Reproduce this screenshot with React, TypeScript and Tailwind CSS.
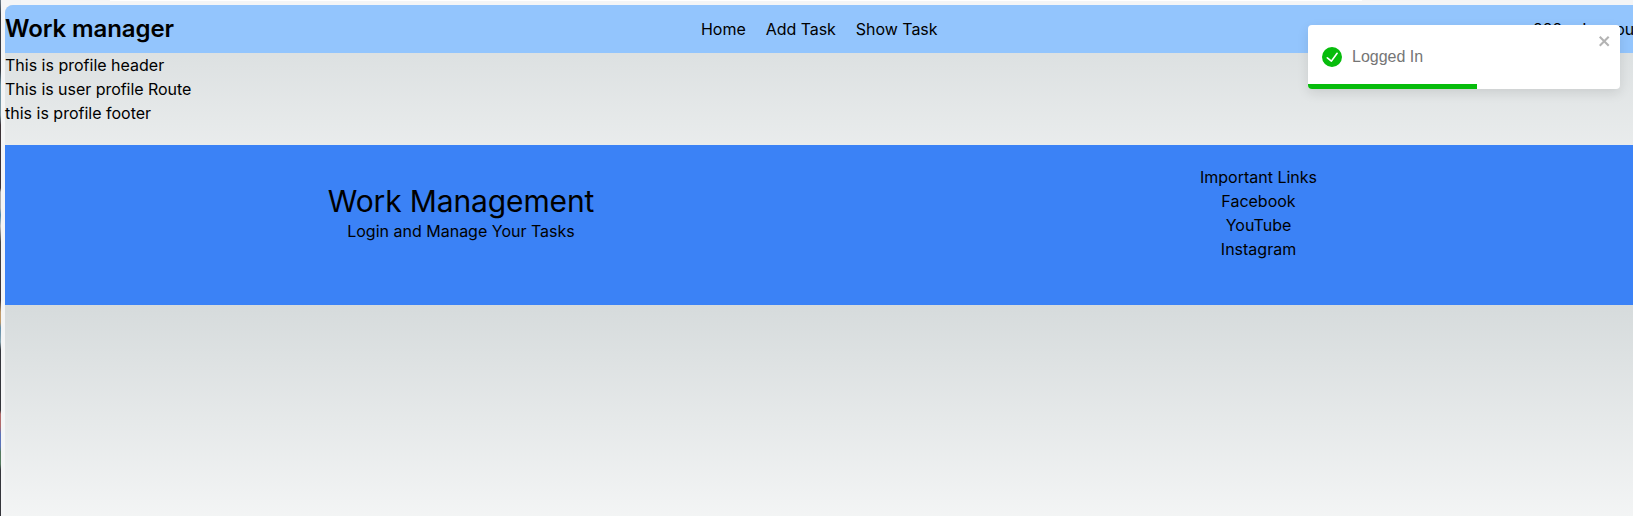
const edge =
  "bg-[linear-gradient(#6b7a86_0px,#3a4048_14px,#35363c_70px,#6d94a6_85px,#7a93a0_115px,#3b3236_125px,#3b3236_188px,#aaaaaa_192px,#aaaaaa_208px,#4d86a8_215px,#bdbdbd_226px,#444444_242px,#3b3236_300px,#c09a6a_312px,#c09a6a_322px,#5f8cab_328px,#8aa5b0_342px,#34353b_350px,#34353b_410px,#b06a6a_414px,#b06a6a_426px,#5a72b8_434px,#5a72b8_446px,#557a5f_452px,#557a5f_464px,#34353b_470px)]";

const links = ["Home", "Add Task", "Show Task"];
const social = ["Important Links", "Facebook", "YouTube", "Instagram"];

function Navbar() {
  return (
    <nav className="flex h-12 items-center rounded-tl-lg bg-[#93c5fd]">
      <h1 className="w-[696px] shrink-0 text-2xl font-semibold tracking-[-0.09px]">Work manager</h1>
      <ul className="flex w-[832px] shrink-0 gap-5 tracking-[-0.04px]">
        {links.map((l) => (
          <li key={l}>{l}</li>
        ))}
      </ul>
      <ul className="flex gap-5">
        <li>222</li>
        <li>Log out</li>
      </ul>
    </nav>
  );
}

function Toast() {
  return (
    <div className="absolute left-[1308px] top-[25px] flex h-16 w-[312px] items-center overflow-hidden rounded bg-white pb-px pl-[14px] font-['Liberation_Sans',sans-serif] text-[#757575] shadow-[0_4px_12px_rgba(0,0,0,0.1)]">
      <svg viewBox="0 0 24 24" className="size-5 shrink-0" fill="#07bc0c">
        <path d="M12 0a12 12 0 1012 12A12.014 12.014 0 0012 0zm6.927 8.2l-6.845 9.289a1.011 1.011 0 01-1.43.188l-4.888-3.908a1 1 0 111.25-1.562l4.076 3.261 6.227-8.451a1 1 0 111.61 1.183z" />
      </svg>
      <span className="ml-[10px]">Logged In</span>
      <svg viewBox="0 0 14 16" className="absolute right-2 top-2 h-4 w-[14px]" fill="#b3b3b3">
        <path
          fillRule="evenodd"
          d="M7.71 8.23l3.75 3.75-1.48 1.48-3.75-3.75-3.75 3.75L1 11.98l3.75-3.75L1 4.48 2.48 3l3.75 3.75L9.98 3l1.48 1.48-3.75 3.75z"
        />
      </svg>
      <div className="absolute bottom-0 left-0 h-[5px] w-[169px] bg-[#07bc0c]" />
    </div>
  );
}

function Footer() {
  return (
    <footer className="flex h-40 bg-[#3b82f6] py-5 pl-[57px] text-center">
      <div className="flex h-24 w-[798px] flex-col justify-center">
        <h2 className="text-3xl leading-9 tracking-[-0.14px]">Work Management</h2>
        <p>Login and Manage Your Tasks</p>
      </div>
      <ul className="w-[797px]">
        {social.map((s) => (
          <li key={s}>{s}</li>
        ))}
      </ul>
    </footer>
  );
}

export default function App() {
  return (
    <div className="relative flex h-[516px] w-full overflow-hidden bg-[#f4f5f6] font-[Inter,sans-serif] text-base text-black">
      <div className={`w-px shrink-0 ${edge}`} />
      <div className="ml-1 flex min-w-0 flex-1 flex-col">
        <div className="flex h-[5px] shrink-0 items-start">
          <div className="ml-[105px] h-px w-[1252px] bg-white" />
        </div>
        <div className="flex-1 rounded-tl-lg bg-[linear-gradient(to_bottom,rgb(214,219,220),white)] bg-[length:100%_300px]">
          <div className="w-[1720px]">
            <Navbar />
            <main className="pb-5">
              <p>This is profile header</p>
              <p className="tracking-[-0.04px]">This is user profile Route</p>
              <p>this is profile footer</p>
            </main>
            <Footer />
          </div>
        </div>
      </div>
      <Toast />
    </div>
  );
}
